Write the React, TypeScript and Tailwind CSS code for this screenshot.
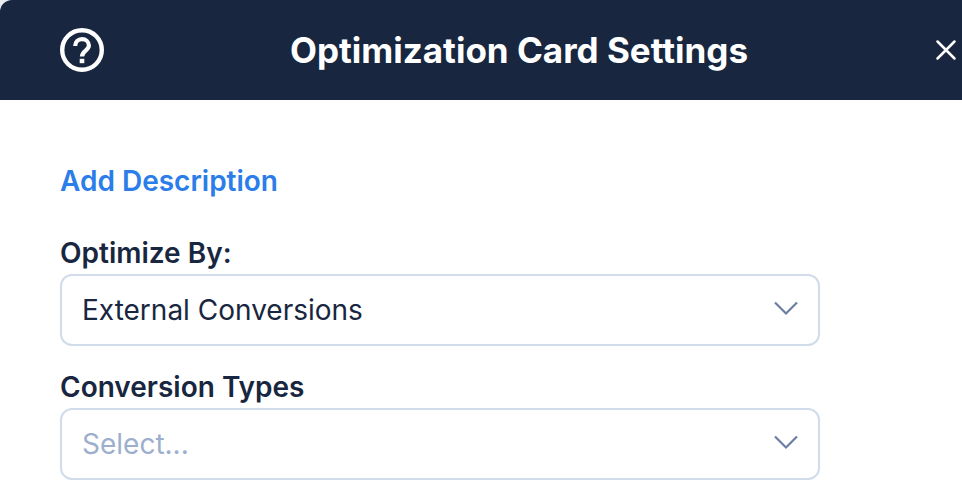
import { useId, useState } from "react";

function Chevron() {
  return (
    <svg className="pointer-events-none absolute inset-y-0 right-[22px] my-auto h-[70px] w-6 text-[#6b7fa5]" viewBox="0 0 24 70" fill="none" stroke="currentColor" strokeWidth="2.200" aria-hidden="true">
      <path d="M1 27.500l11 11L23 27.500" />
    </svg>
  );
}

type FieldProps = { label: string; options: string[]; placeholder?: string; initial?: string };

function SelectField({ label, options, placeholder, initial = "" }: FieldProps) {
  const id = useId();
  const [value, setValue] = useState(initial);
  return (
    <div className="flex flex-col">
      <label htmlFor={id} className="text-[28px] font-semibold leading-[42px]">{label}</label>
      <div className="relative">
        <select
          id={id}
          value={value}
          onChange={(e) => setValue(e.target.value)}
          className={`h-[72px] w-full appearance-none rounded-xl border-2 border-[#d0dcea] bg-white pl-5 pr-14 text-[28px] ${value ? "text-[#18273f]" : "text-[#9dafcd]"}`}
        >
          {placeholder && <option value="">{placeholder}</option>}
          {options.map((o) => <option key={o}>{o}</option>)}
        </select>
        <Chevron />
      </div>
    </div>
  );
}

export default function App() {
  return (
    <div className="bg-white font-['Inter',sans-serif] text-[#18273f]">
      <div className="bg-[#e9ebee]">
        <header className="flex h-[100px] items-center justify-between rounded-tl-xl bg-[#18273f] pl-[60px] pr-1 text-white">
          <button type="button" aria-label="Help">
            <svg className="h-11 w-11" viewBox="0 0 44 44" fill="none" stroke="currentColor" strokeWidth="4.200" aria-hidden="true">
              <circle cx="22" cy="22" r="19.800" strokeWidth="4.400" />
              <path d="M15.200 18c0-4 3-6.900 6.800-6.900s6.900 2.700 6.900 6.500c0 5-6.900 5.200-6.900 11" />
              <path d="M22 30.800v4.400" strokeWidth="4.600" />
            </svg>
          </button>
          <h1 className="text-[35px] font-bold">Optimization Card Settings</h1>
          <button type="button" aria-label="Close">
            <svg className="h-6 w-6" viewBox="0 0 24 24" fill="none" stroke="currentColor" strokeWidth="2.500" strokeLinecap="round" aria-hidden="true">
              <path d="M3.500 3.500l17 17M20.500 3.500l-17 17" />
            </svg>
          </button>
        </header>
      </div>
      <main className="mr-[142px] ml-[60px] flex flex-col pt-15">
        <a href="#description" className="self-start text-[28px] font-semibold leading-[42px] text-[#2b7de9]">Add Description</a>
        <form className="mt-[30px] flex flex-col gap-5">
          <SelectField label="Optimize By:" initial="External Conversions" options={["External Conversions"]} />
          <SelectField label="Conversion Types" placeholder="Select..." options={["Purchase", "Lead"]} />
        </form>
      </main>
    </div>
  );
}
